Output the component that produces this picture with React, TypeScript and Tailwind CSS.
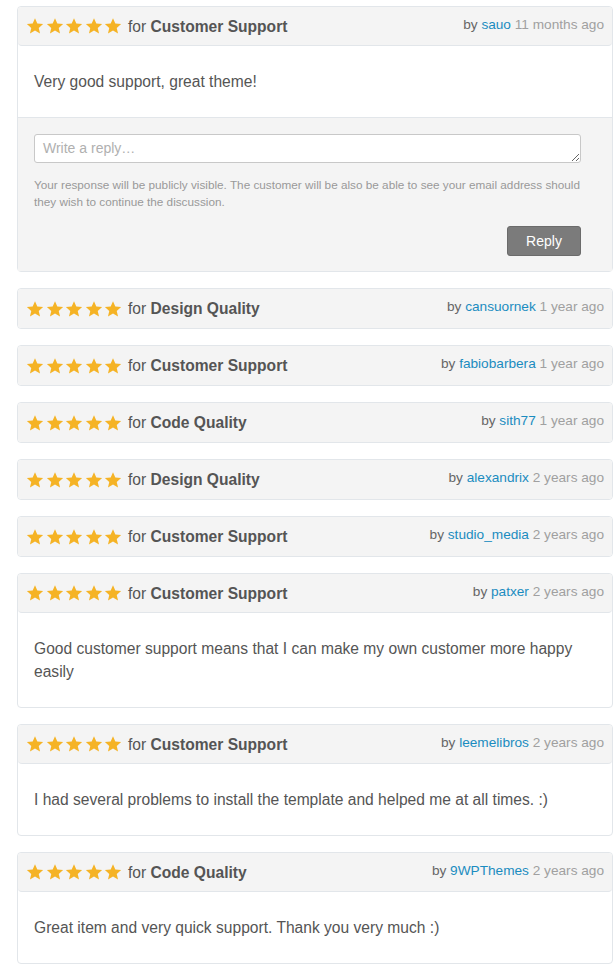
import React from "react";

type Review = {
  category: string;
  user: string;
  time: string;
  body?: string;
  reply?: boolean;
};

const reviews: Review[] = [
  { category: "Customer Support", user: "sauo", time: "11 months ago", body: "Very good support, great theme!", reply: true },
  { category: "Design Quality", user: "cansuornek", time: "1 year ago" },
  { category: "Customer Support", user: "fabiobarbera", time: "1 year ago" },
  { category: "Code Quality", user: "sith77", time: "1 year ago" },
  { category: "Design Quality", user: "alexandrix", time: "2 years ago" },
  { category: "Customer Support", user: "studio_media", time: "2 years ago" },
  {
    category: "Customer Support",
    user: "patxer",
    time: "2 years ago",
    body: "Good customer support means that I can make my own customer more happy easily",
  },
  {
    category: "Customer Support",
    user: "leemelibros",
    time: "2 years ago",
    body: "I had several problems to install the template and helped me at all times. :)",
  },
  {
    category: "Code Quality",
    user: "9WPThemes",
    time: "2 years ago",
    body: "Great item and very quick support. Thank you very much :)",
  },
];

function Star() {
  return (
    <svg width="18" height="18" viewBox="0 0 24 24" className="shrink-0">
      <path
        d="M12 1.6l3.1 7.1 7.7.7-5.8 5.1 1.7 7.6L12 18.1l-6.7 4 1.7-7.6-5.8-5.1 7.7-.7z"
        fill="#f5b325"
      />
    </svg>
  );
}

function ReviewCard({ r }: { r: Review }) {
  return (
    <div className="w-[596px] rounded border border-[#e2e6ea] bg-white">
      {/* header */}
      <div
        className={`flex h-[39px] items-center justify-between rounded bg-[#f4f4f4] px-2 ${
          r.body ? "border-b border-[#e2e6ea]" : ""
        }`}
      >
        <div className="flex items-center pt-[1px]">
          <div className="flex items-center gap-[1.5px]">
            <Star />
            <Star />
            <Star />
            <Star />
            <Star />
          </div>
          <span className="ml-[6px] text-[15.6px] text-[#555]">
            for <b className="font-bold">{r.category}</b>
          </span>
        </div>
        <div className="-mt-[2px] text-[13.65px] text-[#666]">
          by <span className="text-[#1b8cc0]">{r.user}</span>{" "}
          <span className="text-[#a0a0a0]">{r.time}</span>
        </div>
      </div>

      {r.body && (
        <div className="px-4 py-6 text-[15.6px] leading-[23px] text-[#555]">{r.body}</div>
      )}

      {r.reply && (
        <div className="border-t border-[#e2e6ea] bg-[#f4f4f4] pb-[15px] pl-4 pr-[31px] pt-4">
          <textarea
            placeholder="Write a reply…"
            className="block h-[29px] w-full resize-y rounded-[3px] border border-[#c8c8c8] bg-white px-2 py-[3px] text-[14px] leading-[20px] text-[#555] placeholder:text-[#b0b0b0]"
          />
          <p className="mt-[13px] text-[11.75px] leading-[17px] text-[#999]">
            Your response will be publicly visible. The customer will be also be able to see your email address should
            they wish to continue the discussion.
          </p>
          <div className="mt-[16px] flex justify-end">
            <button className="h-[30px] w-[74px] rounded-[3px] border border-[#6b6b6b] bg-[#7b7b7b] text-[14px] text-white">
              Reply
            </button>
          </div>
        </div>
      )}
    </div>
  );
}

export default function App() {
  return (
    <div
      className="flex min-h-screen flex-col gap-[16px] bg-white pl-[17px] pt-[6px]"
      style={{ fontFamily: '"Liberation Sans", Arial, sans-serif' }}
    >
      {reviews.map((r, i) => (
        <ReviewCard key={i} r={r} />
      ))}
    </div>
  );
}
